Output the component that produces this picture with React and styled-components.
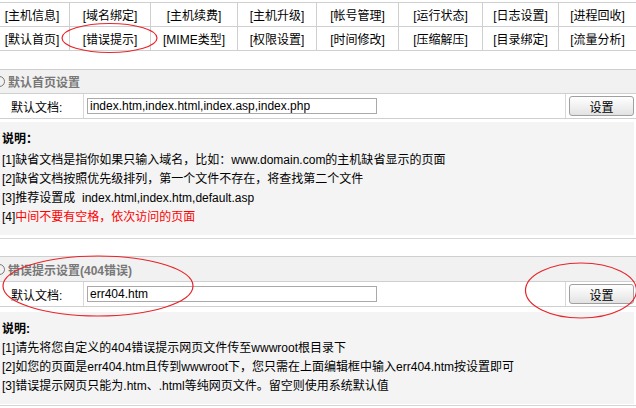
import React from "react";
import styled, { createGlobalStyle } from "styled-components";

const Global = createGlobalStyle`
  html, body { margin: 0; padding: 0; background: #fff; }
  body {
    font-family: "Liberation Sans", "Noto Sans CJK SC", sans-serif;
    font-size: 12px;
    color: #000;
  }
`;

const Page = styled.div`
  position: relative;
  width: 636px;
  height: 408px;
  overflow: hidden;
`;

const Wrapper = styled.div`
  margin-left: -5px;
  width: 641px;
  padding-top: 2px;
`;

const Nav = styled.div`
  display: grid;
  grid-template-columns: 75px 81px 87px 79px 82px 84px 76px 77px;
  border-top: 1px solid #cfcfcf;
`;

const NavCell = styled.div`
  height: 23px;
  display: flex;
  align-items: center;
  justify-content: center;
  border-bottom: 1px solid #cfcfcf;
  border-right: ${(p) => (p.$last ? "none" : "1px solid #cfcfcf")};
  color: #000;
  white-space: nowrap;
`;

const Section = styled.div`
  margin-top: ${(p) => p.$top}px;
  border-bottom: 1px solid #d6d6d6;
  padding-bottom: ${(p) => p.$bottomGap}px;
`;

const Header = styled.div`
  height: ${(p) => p.$h}px;
  display: flex;
  align-items: center;
  background: #f1f1f1;
  border-top: 1px solid #cfcfcf;
  border-bottom: 1px solid #cfcfcf;
  color: #777;
  font-weight: bold;
  font-size: 12px;
`;

const Radio = styled.span`
  width: 9px;
  height: 9px;
  border: 1px solid #777;
  border-radius: 50%;
  margin-left: -1px;
  margin-right: 3px;
  flex: none;
`;

const FormRow = styled.div`
  display: grid;
  grid-template-columns: 89px 482px 1fr;
  height: ${(p) => p.$h}px;
  border-bottom: 1px solid #cfcfcf;
`;

const Cell = styled.div`
  display: flex;
  align-items: center;
  border-right: ${(p) => (p.$divider ? "1px solid #d8d8d8" : "none")};
  padding-left: ${(p) => p.$pad || 0}px;
`;

const TextInput = styled.input`
  box-sizing: border-box;
  width: 290px;
  height: 16px;
  border: 1px solid #a9a9a9;
  padding: 0 2px;
  font-family: "Liberation Sans", "Noto Sans CJK SC", sans-serif;
  font-size: 12px;
  color: #000;
  background: #fff;
  outline: none;
`;

const Button = styled.button`
  box-sizing: border-box;
  width: 65px;
  height: 20px;
  padding: 0;
  border: 1px solid #a0a0a0;
  border-radius: 3px;
  background: linear-gradient(#ffffff, #f0f0f0 55%, #e2e2e2);
  font-family: "Liberation Sans", "Noto Sans CJK SC", sans-serif;
  font-size: 12px;
  color: #000;
`;

const Note = styled.div`
  margin-top: ${(p) => p.$gap}px;
  margin-right: 2px;
  background: #f4f4f4;
  padding: 8px 7px 8px 7px;
  line-height: 19px;
`;

const NoteTitle = styled.div`
  font-weight: bold;
  margin-bottom: ${(p) => p.$after || 0}px;
`;

const NoteLine = styled.div`
  white-space: nowrap;
`;

const Red = styled.span`
  color: #ff0000;
`;

const Overlay = styled.svg`
  position: absolute;
  left: 0;
  top: 0;
  pointer-events: none;
`;

const navRow1 = ["[主机信息]", "[域名绑定]", "[主机续费]", "[主机升级]", "[帐号管理]", "[运行状态]", "[日志设置]", "[进程回收]"];
const navRow2 = ["[默认首页]", "[错误提示]", "[MIME类型]", "[权限设置]", "[时间修改]", "[压缩解压]", "[目录绑定]", "[流量分析]"];

function SettingForm({ value, h }) {
  return (
    <FormRow $h={h}>
      <Cell $divider $pad={16}>默认文档:</Cell>
      <Cell $divider $pad={3}>
        <TextInput defaultValue={value} />
      </Cell>
      <Cell $pad={3}>
        <Button>设置</Button>
      </Cell>
    </FormRow>
  );
}

export default function App() {
  return (
    <Page>
      <Global />
      <Wrapper>
        <Nav>
          {navRow1.map((t, i) => (
            <NavCell key={t} $last={i === 7}>{t}</NavCell>
          ))}
          {navRow2.map((t, i) => (
            <NavCell key={t} $last={i === 7}>{t}</NavCell>
          ))}
        </Nav>

        <Section $top={18} $bottomGap={3}>
          <Header $h={23}>
            <Radio />默认首页设置
          </Header>
          <SettingForm value="index.htm,index.html,index.asp,index.php" h={24} />
          <Note $gap={3}>
            <NoteTitle $after={2}>说明：</NoteTitle>
            <NoteLine>[1]缺省文档是指你如果只输入域名，比如：www.domain.com的主机缺省显示的页面</NoteLine>
            <NoteLine>[2]缺省文档按照优先级排列，第一个文件不存在，将查找第二个文件</NoteLine>
            <NoteLine>[3]推荐设置成&nbsp;&nbsp;index.html,index.htm,default.asp</NoteLine>
            <NoteLine>[4]<Red>中间不要有空格，依次访问的页面</Red></NoteLine>
          </Note>
        </Section>

        <Section $top={17} $bottomGap={1}>
          <Header $h={24}>
            <Radio />错误提示设置(404错误)
          </Header>
          <SettingForm value="err404.htm" h={24} />
          <Note $gap={5}>
            <NoteTitle>说明:</NoteTitle>
            <NoteLine>[1]请先将您自定义的404错误提示网页文件传至wwwroot根目录下</NoteLine>
            <NoteLine>[2]如您的页面是err404.htm且传到wwwroot下，您只需在上面编辑框中输入err404.htm按设置即可</NoteLine>
            <NoteLine>[3]错误提示网页只能为.htm、.html等纯网页文件。留空则使用系统默认值</NoteLine>
          </Note>
        </Section>
      </Wrapper>

      <Overlay width="636" height="408" viewBox="0 0 636 408">
        <g fill="none" stroke="#e8242b" strokeWidth="1.2">
          <ellipse cx="109.5" cy="38" rx="47.5" ry="14.5" />
          <ellipse cx="98" cy="286" rx="95" ry="30" />
          <ellipse cx="581" cy="290.5" rx="55.5" ry="27.5" />
        </g>
      </Overlay>
    </Page>
  );
}
